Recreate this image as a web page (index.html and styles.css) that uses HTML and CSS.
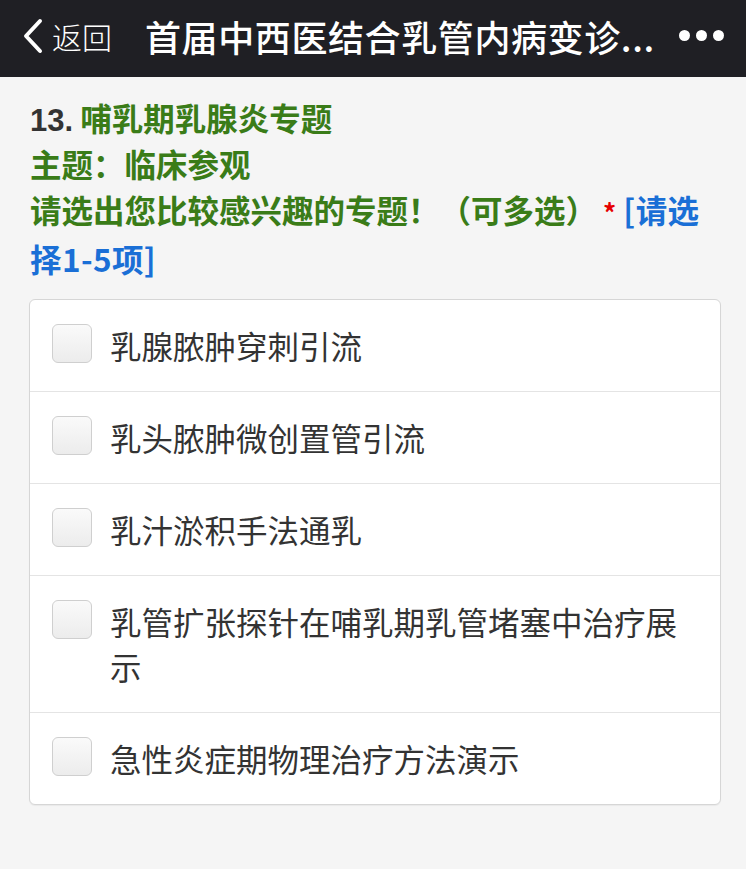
FILE: index.html
```html
<!DOCTYPE html>
<html lang="zh-CN">
<head>
<meta charset="utf-8">
<title>问卷</title>
<link rel="stylesheet" href="styles.css">
</head>
<body>
<header class="topbar">
  <div class="back">
    <svg class="chev" width="22" height="36" viewBox="0 0 22 36"><path d="M18 3 L4 18 L18 33" fill="none" stroke="#fff" stroke-width="4" stroke-linecap="round" stroke-linejoin="round"/></svg>
    <span class="back-text">返回</span>
  </div>
  <div class="title">首届中西医结合乳管内病变诊...</div>
  <div class="more"><span class="dot"></span><span class="dot"></span><span class="dot"></span></div>
</header>
<main class="content">
  <div class="question">
    <span class="num">13.</span> 哺乳期乳腺炎专题<br>主题：临床参观<br>请选出您比较感兴趣的专题！（可多选）<span class="req">*</span> <span class="hint">[请选<br>择1-5项]</span>
  </div>
  <div class="card">
    <label class="row"><span class="box"></span><span class="txt">乳腺脓肿穿刺引流</span></label>
    <label class="row"><span class="box"></span><span class="txt">乳头脓肿微创置管引流</span></label>
    <label class="row"><span class="box"></span><span class="txt">乳汁淤积手法通乳</span></label>
    <label class="row"><span class="box"></span><span class="txt">乳管扩张探针在哺乳期乳管堵塞中治疗展示</span></label>
    <label class="row last"><span class="box"></span><span class="txt">急性炎症期物理治疗方法演示</span></label>
  </div>
</main>
</body>
</html>
```
FILE: styles.css
```css
html, body {
  margin: 0;
  padding: 0;
}
body {
  background: #f5f5f5;
  font-family: "Noto Sans CJK SC", "Noto Sans", "Liberation Sans", sans-serif;
  width: 746px;
  min-height: 869px;
}
.topbar {
  height: 77px;
  background: #1f1f24;
  display: flex;
  align-items: center;
  color: #fff;
  padding: 0 22px 6px 22px;
  box-sizing: border-box;
}
.back {
  display: flex;
  align-items: center;
  width: 123px;
  flex: none;
}
.chev {
  margin-right: 8px;
}
.back-text {
  font-size: 30px;
  font-weight: 300;
}
.title {
  flex: 1;
  font-size: 36px;
  font-weight: 500;
  white-space: nowrap;
  overflow: hidden;
  letter-spacing: 0.6px;
}
.more {
  display: flex;
  gap: 6px;
  align-items: center;
}
.dot {
  width: 11px;
  height: 11px;
  border-radius: 50%;
  background: #fff;
}
.content {
  padding: 17px 20px 0 30px;
}
.question {
  font-size: 31.5px;
  line-height: 46px;
  font-weight: 700;
  color: #3a7c18;
  white-space: nowrap;
}
.num {
  color: #333;
  font-family: "Liberation Sans", "Noto Sans CJK SC", sans-serif;
  font-weight: 700;
  font-size: 31px;
  line-height: 1;
}
.req {
  color: #e60000;
  font-size: 26px;
  margin-left: 6px;
}
.hint {
  color: #1a6fd6;
  letter-spacing: 0.4px;
}
.card {
  margin-top: 18px;
  margin-left: -1px;
  margin-right: 5px;
  background: #fff;
  border: 1px solid #d6d6d6;
  border-radius: 6px;
  box-shadow: 0 1px 1px rgba(0,0,0,0.05);
}
.row {
  display: flex;
  align-items: flex-start;
  padding: 23px 20px 23px 22px;
  border-bottom: 1px solid #e4e4e4;
}
.row.last {
  border-bottom: none;
}
.box {
  flex: none;
  width: 38px;
  height: 37px;
  margin-top: 1px;
  margin-right: 18px;
  border: 1px solid #cfcfcf;
  border-radius: 6px;
  background: linear-gradient(#fafafa, #ececec);
}
.txt {
  font-size: 31.5px;
  line-height: 45px;
  color: #333;
}
```
